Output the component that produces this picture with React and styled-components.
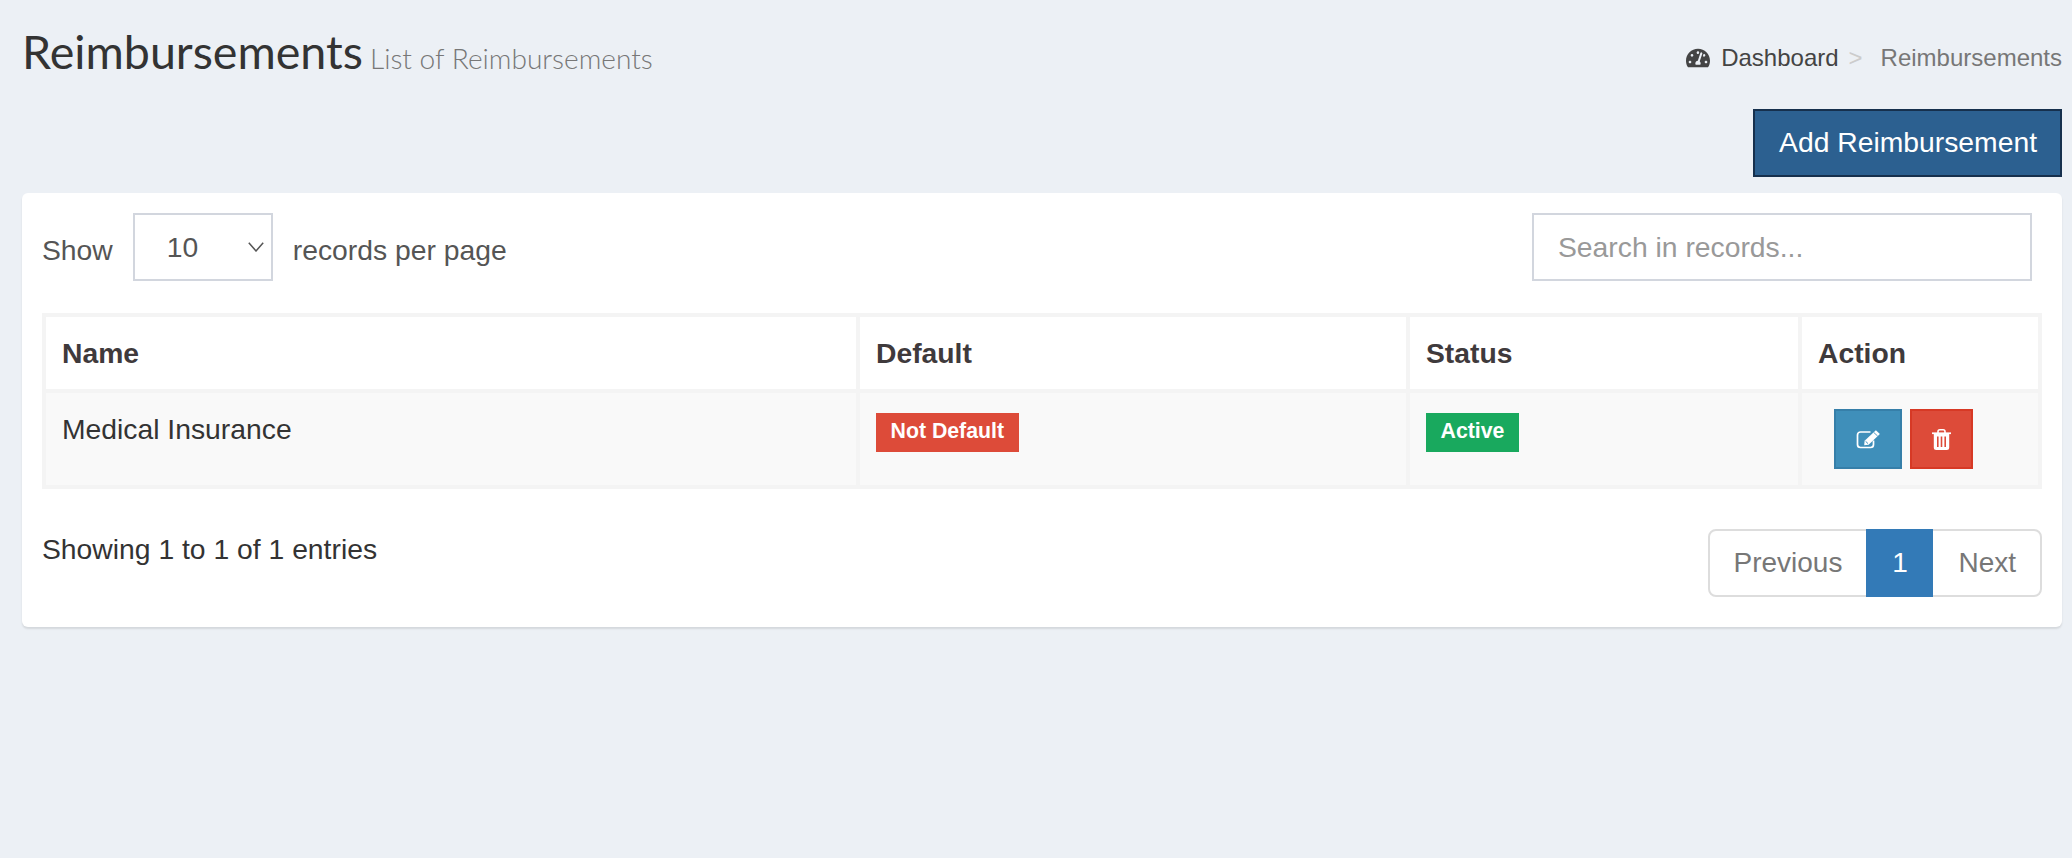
import { createGlobalStyle } from 'styled-components'
import styled from 'styled-components'
import { FaTachometerAlt } from 'react-icons/fa'

const GlobalStyle = createGlobalStyle`
  html, body {
    margin: 0;
    padding: 0;
    background: #ecf0f5;
  }
  body {
    font-family: "Liberation Sans", Arial, sans-serif;
    font-size: 28.3px;
    line-height: 40px;
    color: #333;
  }
  * {
    box-sizing: border-box;
  }
`

const Page = styled.div`
  min-height: 858px;
  padding: 30px 10px 0 22px;
`

const PageHeader = styled.div`
  display: flex;
  justify-content: space-between;
  align-items: center;
  height: 48px;
`

const PageTitle = styled.h1`
  margin: 0;
  font-family: Lato, "Noto Sans", sans-serif;
  font-size: 46.6px;
  font-weight: 400;
  line-height: 48px;
  color: #333;
`

const SubTitle = styled.small`
  margin-left: 7px;
  font-size: 28.1px;
  font-weight: 300;
  color: #777;
`

const Breadcrumb = styled.div`
  display: flex;
  align-items: center;
  padding-top: 8px;
  font-size: 24px;
  color: #444;
`

const CrumbIcon = styled(FaTachometerAlt)`
  width: 24px;
  height: 24px;
  margin-right: 11px;
`

const CrumbSep = styled.span`
  margin: 0 18px 0 10px;
  color: #ccc;
`

const CrumbCurrent = styled.span`
  color: #777;
`

const ActionRow = styled.div`
  display: flex;
  justify-content: flex-end;
  margin-top: 31px;
  margin-bottom: 16px;
`

const AddButton = styled.button`
  height: 68px;
  padding: 0 23px 2px 24px;
  border: 2px solid #16304d;
  background: #2c6090;
  color: #fff;
  font: inherit;
`

const Card = styled.div`
  padding: 20px 20px 30px;
  background: #fff;
  border-radius: 6px;
  box-shadow: 0 2px 2px rgba(0, 0, 0, 0.1);
`

const Controls = styled.div`
  display: flex;
  justify-content: space-between;
  align-items: center;
  margin-bottom: 32px;
`

const PerPage = styled.div`
  display: flex;
  align-items: center;
  gap: 20px;
  color: #555;
`

const PerPageText = styled.span`
  padding-top: 6px;
`

const SelectBox = styled.div`
  display: flex;
  justify-content: space-between;
  align-items: center;
  width: 140px;
  height: 68px;
  padding: 0 7px 0 32px;
  border: 2px solid #d2d6de;
  color: #555;
`

const SearchInput = styled.input`
  width: 500px;
  height: 68px;
  margin-right: 10px;
  padding: 0 24px;
  border: 2px solid #d2d6de;
  outline: none;
  font: inherit;
  color: #555;

  &::placeholder {
    color: #999;
    opacity: 1;
  }
`

const Table = styled.table`
  width: 2000px;
  table-layout: fixed;
  border-collapse: separate;
  border-spacing: 4px;
  background: #f4f4f4;
`

const HeadCell = styled.th`
  width: ${({ $width }) => $width};
  padding: 16px;
  background: #fff;
  text-align: left;
  font-weight: 700;
  color: #3f3a3c;
`

const Cell = styled.td`
  padding: 16px;
  background: #f9f9f9;
  vertical-align: top;
  color: #333;
`

const Badge = styled.span`
  display: inline-block;
  height: 39px;
  margin-top: 4px;
  padding: 0 14.5px;
  background: ${({ $tone }) => ($tone === 'green' ? '#19a95e' : '#dd4b39')};
  color: #fff;
  font-size: 21.3px;
  font-weight: 700;
  line-height: 36px;
  vertical-align: top;
`

const ActionGroup = styled.div`
  display: flex;
  gap: 8px;
  padding-left: 16px;
`

const IconButton = styled.button`
  display: flex;
  justify-content: center;
  align-items: center;
  width: ${({ $width }) => $width}px;
  height: 60px;
  padding: 0;
  border: 2px solid ${({ $border }) => $border};
  background: ${({ $bg }) => $bg};
  color: #fff;
`

const Footer = styled.div`
  display: flex;
  justify-content: space-between;
  align-items: flex-start;
  margin-top: 40px;
`

const Pagination = styled.div`
  display: flex;
  height: 68px;
  border: 2px solid #ddd;
  border-radius: 8px;
  font-size: 28px;
`

const PageLink = styled.span`
  display: flex;
  align-items: center;
  padding: 0 24px;
  color: #777;

  &:first-child {
    padding-left: 23px;
  }
`

const ActivePage = styled.span`
  display: flex;
  align-items: center;
  justify-content: center;
  width: 67px;
  margin: -2px 1px -2px 0;
  background: #337ab7;
  color: #fff;
`

const EditIcon = () => (
  <svg width="24" height="19" viewBox="0 0 24 19">
    <path
      d="M14.5 2 H4.5 a3 3 0 0 0 -3 3 V14.5 a3 3 0 0 0 3 3 H14.5 a3 3 0 0 0 3 -3 V10.5"
      fill="none"
      stroke="#fff"
      strokeWidth="1.7"
    />
    <path d="M8.2 15.2 L8.6 10.8 L19.9 0.2 L23.9 3.9 L12.6 14.8 Z" fill="#fff" />
    <path d="M17.6 2.3 L21.6 6" fill="none" stroke="#3f8fba" strokeWidth="0.9" />
    <path d="M9.6 11.3 L12 13.6" fill="none" stroke="#3f8fba" strokeWidth="1" />
  </svg>
)

const TrashIcon = () => (
  <svg width="19" height="21" viewBox="0 0 19 21">
    <path d="M6 4 V2.6 a1.8 1.8 0 0 1 1.8 -1.8 H11.2 a1.8 1.8 0 0 1 1.8 1.8 V4" fill="none" stroke="#fff" strokeWidth="1.6" />
    <rect x="0" y="3.4" width="19" height="1.7" fill="#fff" />
    <path
      fillRule="evenodd"
      d="M1.8 5 H17.2 V18.5 a2.5 2.5 0 0 1 -2.5 2.5 H4.3 a2.5 2.5 0 0 1 -2.5 -2.5 Z M5 7.5 V18 H6.6 V7.5 Z M8.7 7.5 V18 H10.3 V7.5 Z M12.4 7.5 V18 H14 V7.5 Z"
      fill="#fff"
    />
  </svg>
)

const App = () => {
  return (
    <Page>
      <GlobalStyle />
      <PageHeader>
        <PageTitle>
          Reimbursements<SubTitle>List of Reimbursements</SubTitle>
        </PageTitle>
        <Breadcrumb>
          <CrumbIcon />
          Dashboard
          <CrumbSep>&gt;</CrumbSep>
          <CrumbCurrent>Reimbursements</CrumbCurrent>
        </Breadcrumb>
      </PageHeader>

      <ActionRow>
        <AddButton>Add Reimbursement</AddButton>
      </ActionRow>

      <Card>
        <Controls>
          <PerPage>
            <PerPageText>Show</PerPageText>
            <SelectBox>
              10
              <svg width="16" height="10" viewBox="0 0 16 10" fill="none" stroke="#555" strokeWidth="1.5">
                <path d="M0.8 0.8 L8 9 L15.2 0.8" />
              </svg>
            </SelectBox>
            <PerPageText>records per page</PerPageText>
          </PerPage>
          <SearchInput placeholder="Search in records..." />
        </Controls>

        <Table>
          <thead>
            <tr>
              <HeadCell $width="810px">Name</HeadCell>
              <HeadCell $width="546px">Default</HeadCell>
              <HeadCell $width="388px">Status</HeadCell>
              <HeadCell>Action</HeadCell>
            </tr>
          </thead>
          <tbody>
            <tr>
              <Cell>Medical Insurance</Cell>
              <Cell>
                <Badge>Not Default</Badge>
              </Cell>
              <Cell>
                <Badge $tone="green">Active</Badge>
              </Cell>
              <Cell>
                <ActionGroup>
                  <IconButton $width={68} $bg="#3f8fba" $border="#367fa9">
                    <EditIcon />
                  </IconButton>
                  <IconButton $width={63} $bg="#dd4b39" $border="#d73925">
                    <TrashIcon />
                  </IconButton>
                </ActionGroup>
              </Cell>
            </tr>
          </tbody>
        </Table>

        <Footer>
          <span>Showing 1 to 1 of 1 entries</span>
          <Pagination>
            <PageLink>Previous</PageLink>
            <ActivePage>1</ActivePage>
            <PageLink>Next</PageLink>
          </Pagination>
        </Footer>
      </Card>
    </Page>
  )
}

export default App
